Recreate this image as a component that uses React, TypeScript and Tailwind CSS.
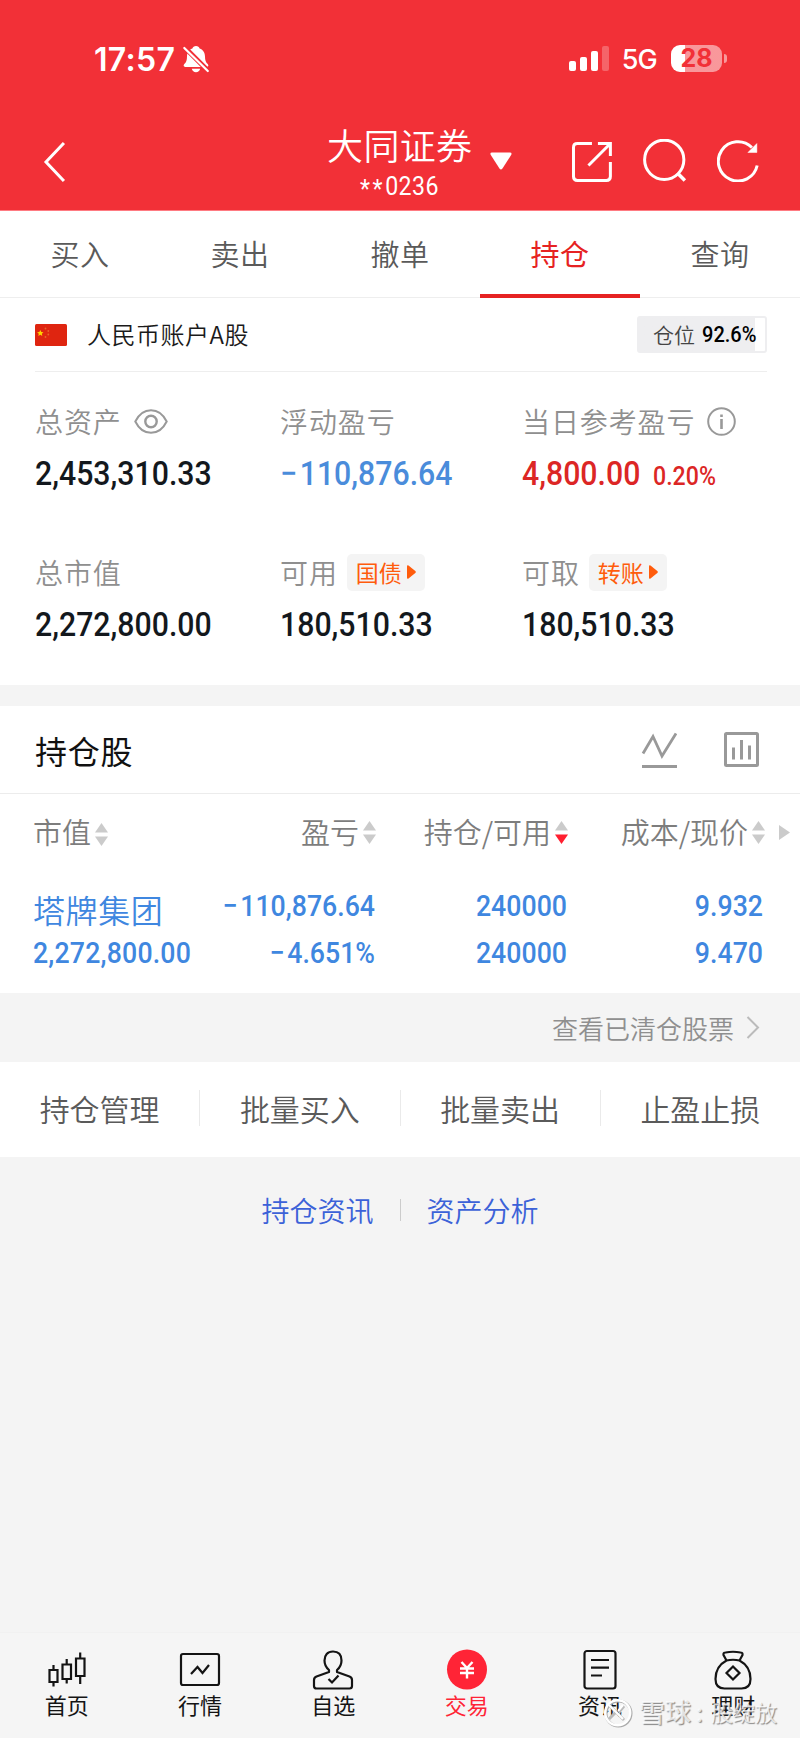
import clsx from 'clsx';
import type { ReactNode } from 'react';

const TABS = ['买入', '卖出', '撤单', '持仓', '查询'];
const ACTIONS = ['持仓管理', '批量买入', '批量卖出', '止盈止损'];

const Num = ({ children, className }: { children: ReactNode; className?: string }) => (
  <span
    className={clsx(
      "inline-block scale-x-[0.89] whitespace-nowrap font-['Roboto',sans-serif] font-medium",
      className,
    )}
  >
    {children}
  </span>
);

const Minus = () => <span className="mr-[3px]">−</span>;

const StatusBar = () => (
  <div className="flex h-[119px] items-start pt-[43px] pr-[73px] pl-[94px] font-['Inter',sans-serif]">
    <span className="text-[32px] leading-[33px] font-semibold tracking-[0.300px]">17:57</span>
    <svg className="mt-[2px] ml-[7px]" width="28" height="29" viewBox="0 0 28 29">
      <path
        d="M14 1c-1.9 0-3.200 1-3.600 2.400C6.600 4.700 5 7.800 5 11.500c0 4-.8 5.700-2.700 7.600C1.200 20.300 1.500 22 3.200 22h21.600c1.700 0 2-1.700.9-2.900-1.900-1.900-2.700-3.600-2.700-7.600 0-3.700-1.600-6.800-5.400-8.100C17.200 2 15.900 1 14 1zM9.800 23.800h8.400c-.5 2.100-2.200 3.400-4.200 3.400s-3.700-1.300-4.200-3.400z"
        fill="white"
      />
      <path d="M1.200 1 26 25.700" stroke="#f23037" strokeWidth="5" />
      <path d="M2.300 3 25.800 26" stroke="white" strokeWidth="2.200" strokeLinecap="round" />
    </svg>
    <div className="ml-auto flex items-start">
      <svg className="mt-[3px]" width="40" height="26" viewBox="0 0 40 26" fill="white">
        <rect x="0" y="15" width="7" height="10" rx="2" />
        <rect x="11" y="11" width="7" height="14" rx="2" />
        <rect x="22" y="5" width="7" height="20" rx="2" />
        <rect x="33" y="0" width="7" height="25" rx="2" opacity="0.25" />
      </svg>
      <span className="ml-[13px] text-[27px] leading-[34px] font-medium tracking-[-0.800px]">5G</span>
      <div className="mt-[2px] ml-[14px] flex items-center">
        <div className="flex h-[27px] w-[51px] items-center justify-center rounded-[9px] bg-linear-to-r from-white from-28% to-white/50 to-28% text-[25px] leading-none font-bold text-[#f23037]">
          28
        </div>
        <div className="ml-[2px] h-[9px] w-[3px] rounded-r-full bg-white/50" />
      </div>
    </div>
  </div>
);

const TitleBar = () => (
  <div className="flex h-[91px] items-start pr-[40px] pl-[43px]">
    <svg className="mt-[22px]" width="24" height="42" viewBox="0 0 24 42" fill="none">
      <path d="M21 2 3 21l18 19" stroke="white" strokeWidth="3" />
    </svg>
    <div className="ml-[258px] flex w-[150px] flex-col items-center pt-[7px]">
      <span className="text-[36px] leading-[36px] font-[350] tracking-[0.300px]">大同证券</span>
      <Num className="mt-[9px] text-[26px] leading-[30px] font-normal">
        <span className="relative top-[3px] tracking-[3px]">**</span>
        <span className="tracking-[0.500px]">0236</span>
      </Num>
    </div>
    <svg className="mt-[33px] ml-[16px]" width="22" height="18" viewBox="0 0 22 18">
      <path d="M2 .5h18q2.500.2 1.200 2.500L12.500 16.500q-1.500 1.800-3 0L.8 3Q-.5.700 2 .5z" fill="white" />
    </svg>
    <svg className="mt-[23px] ml-[60px]" width="40" height="40" viewBox="0 0 40 40" fill="none" stroke="white" strokeWidth="3">
      <path d="M20 1.500H5.500q-4 0-4 4v29q0 4 4 4h29q4 0 4-4V20" />
      <path d="M26 1.500h12.500V14M38 2 16.500 23.500" />
    </svg>
    <svg className="mt-[20px] ml-[31px]" width="44" height="43" viewBox="0 0 44 43" fill="none" stroke="white" strokeWidth="3">
      <circle cx="21.300" cy="20.800" r="19.700" />
      <path d="m34.500 34 7.500 7.500" strokeWidth="3.500" />
    </svg>
    <svg className="mt-[20px] ml-[30px]" width="43" height="43" viewBox="0 0 43 43" fill="none" stroke="white" strokeWidth="3">
      <path d="M40.300 26.500A19.700 19.700 0 1 1 35 8.500" />
      <path d="M40 4.500v9h-9z" fill="white" strokeWidth="0.500" />
    </svg>
  </div>
);

const Chip = ({ children }: { children: ReactNode }) => (
  <span className="ml-[9px] flex h-[37px] w-[78px] items-center justify-center gap-[5px] rounded-[5px] bg-[#f4f4f4] text-[23px] leading-none font-normal tracking-normal text-[#ff5c0c]">
    {children}
    <svg width="9" height="14" viewBox="0 0 9 14" fill="currentColor">
      <path d="M0 1.500Q0-.5 1.500.5l6.800 5.500q1 1 0 2L1.500 13.500Q0 14.500 0 12.500z" />
    </svg>
  </span>
);

type StatProps = {
  label: string;
  value: ReactNode;
  color?: string;
  extra?: ReactNode;
  suffix?: ReactNode;
};

const Stat = ({ label, value, color = 'text-[#13181d]', extra, suffix }: StatProps) => (
  <div>
    <div className="flex h-[38px] items-center text-[28px] leading-none font-[350] tracking-[0.900px] whitespace-nowrap text-[#8f8f8f]">
      {label}
      {extra}
    </div>
    <div className={clsx('mt-[13px] flex h-[39px] items-baseline text-[34px] leading-[40px]', color)}>
      <Num className="origin-left">{value}</Num>
      {suffix}
    </div>
  </div>
);

const Sort = ({ desc, low }: { desc?: boolean; low?: boolean }) => (
  <svg className={clsx('ml-[4px] shrink-0', low && 'mt-[4px]')} width="13" height="23" viewBox="0 0 13 23">
    <path d="M6.500 0 13 9.500H0z" fill="#cbcbcb" />
    <path d="M0 13.500h13L6.500 23z" fill={desc ? '#ff1f30' : '#cbcbcb'} />
  </svg>
);

const Holdings = () => (
  <div className="h-[199px] bg-white">
    <div className="grid h-[76px] grid-cols-[156px_186px_192px_197px_1fr] items-center pl-[34px] text-[29px] leading-none font-[350] whitespace-nowrap text-[#7d7d7d]">
      <div className="-ml-px flex items-center">
        <span className="mt-[-2px]">市值</span>
        <Sort low />
      </div>
      <div className="flex items-center justify-end">
        <span className="mt-[-2px]">盈亏</span>
        <Sort />
      </div>
      <div className="flex items-center justify-end">
        <span className="mt-[-2px]">持仓/可用</span>
        <Sort desc />
      </div>
      <div className="flex items-center justify-end">
        <span className="mt-[-2px]">成本/现价</span>
        <Sort />
      </div>
      <svg className="ml-[14px]" width="11" height="15" viewBox="0 0 11 15">
        <path d="M0 0 11 7.500 0 15z" fill="#cbcbcb" />
      </svg>
    </div>
    <div className="grid grid-cols-[156px_186px_192px_196px] pt-[12px] pl-[33px] text-[30px] leading-[47px] text-[#3f87e0]">
      <span className="pt-[7px] text-[32px] leading-[40px] font-[350] tracking-[0.600px] whitespace-nowrap">
        塔牌集团
      </span>
      <Num className="origin-right text-right">
        <Minus />
        110,876.64
      </Num>
      <Num className="origin-right text-right">240000</Num>
      <Num className="origin-right text-right">9.932</Num>
      <Num className="origin-left tracking-[0.200px]">2,272,800.00</Num>
      <Num className="origin-right text-right">
        <Minus />
        4.651%
      </Num>
      <Num className="origin-right text-right">240000</Num>
      <Num className="origin-right text-right">9.470</Num>
    </div>
  </div>
);

const NavItem = ({ label, active, children }: { label: string; active?: boolean; children: ReactNode }) => (
  <div
    className={clsx(
      'flex flex-1 flex-col items-center pt-[15px] text-[22px] leading-[25px]',
      active ? 'text-[#ff2436]' : 'text-[#141414]',
    )}
  >
    <svg width="44" height="44" viewBox="0 0 44 44" fill="none" stroke="currentColor" strokeWidth="2.200">
      {children}
    </svg>
    {label}
  </div>
);

const BottomNav = () => (
  <div className="flex h-[106px] border-t border-[#f1f1f1] bg-[#f5f5f5]">
    <NavItem label="首页">
      <path d="M4.500 22h8v12h-8zM8.500 17v5M8.500 34v4.500M17.500 16.500h8.500v14.500h-8.500zM21.700 11v5.500M21.700 31v4.500M31 10.500h8.500v17.500H31zM35.200 4.500v6M35.200 28v8" />
    </NavItem>
    <NavItem label="行情">
      <rect x="3" y="6" width="38" height="31" rx="2" />
      <path d="m13 26 6.500-7 5 6L31 17" />
    </NavItem>
    <NavItem label="自选">
      <path
        d="M18 24v-2c-3-2.500-4.500-6-4.500-9.500 0-5.500 3-9 8.500-9s8.500 3.500 8.500 9c0 3.500-1.500 7-4.500 9.500v2l12.500 4.500q2.500 1 2.500 3.500v6q0 2.500-2.500 2.500h-33Q3 40.500 3 38v-6q0-2.500 2.500-3.500z"
        strokeLinejoin="round"
      />
      <path d="m17.500 31 3.500 3.500 6.500-7" />
    </NavItem>
    <NavItem label="交易" active>
      <circle cx="22" cy="21.500" r="20" fill="currentColor" stroke="none" />
      <path d="m16.500 14 5.500 6 5.500-6M15 20.500h14M15 25h14M22 20v10.500" stroke="white" strokeWidth="2.400" />
    </NavItem>
    <NavItem label="资讯">
      <rect x="6.500" y="3" width="31" height="37.500" rx="2.500" />
      <path d="M13 12h18M13 19.700h18M13 27.500h11" />
    </NavItem>
    <NavItem label="理财">
      <path
        d="M15.500 12.500 12.500 7q-.5-2.500 2-2.500 7.500-1.500 15 0 2.500 0 2 2.500l-3 5.500M15.500 12.500C7 17 4.500 24 4.500 31q0 9.500 9 9.500h17q9 0 9-9.500c0-7-2.500-14-11-18.500q-6.500-1.500-13 0z"
        strokeLinejoin="round"
      />
      <path d="m22 18.500 6.500 6.500-6.500 6.500-6.500-6.500z" />
    </NavItem>
  </div>
);

const Watermark = () => (
  <div className="absolute right-[23px] bottom-[10px] flex items-center text-[25px] leading-none text-white/75 [text-shadow:1px_1px_1px_#888]">
    <svg className="mr-[6px]" width="30" height="30" viewBox="0 0 30 30" fill="none" stroke="white">
      <circle cx="15.500" cy="15.500" r="12.500" stroke="#aaa" strokeWidth="3" />
      <circle cx="14.700" cy="14.700" r="12.500" strokeWidth="2.500" />
      <path d="m7 8 14 14M21 8l-5 6M6 21l6-6" stroke="#bbb" strokeWidth="3" />
      <path d="m6 7 14 14M20 7l-5 6" strokeWidth="2" />
    </svg>
    <span className="mb-[4px] text-[26px] font-medium">雪球</span>
    <span className="mb-[4px] w-[20px] pl-[5px]">:</span>
    <span className="mb-[4px] text-[22px]">股绽放</span>
  </div>
);

const App = () => (
  <div className="relative flex h-[1738px] w-[800px] flex-col overflow-hidden bg-[#f4f4f4] font-['Noto_Sans_CJK_SC',sans-serif]">
    <header className="h-[211px] border-b border-[#ff7b82] bg-[#f23037] text-white">
      <StatusBar />
      <TitleBar />
    </header>

    <nav className="flex h-[87px] border-b border-[#eee] bg-white text-[29px] font-[350] tracking-[0.500px] text-[#5a5a5a]">
      {TABS.map((tab) => (
        <div
          key={tab}
          className={clsx(
            'flex flex-1 items-center justify-center',
            tab === '持仓' && '-mb-px border-b-4 border-[#e62222] pt-[3px] font-normal text-[#e62222]',
          )}
        >
          {tab}
        </div>
      ))}
    </nav>

    <section className="h-[387px] bg-white pr-[33px] pl-[35px]">
      <div className="flex h-[74px] items-center border-b border-[#eee]">
        <svg width="32" height="22" viewBox="0 0 32 22">
          <rect width="32" height="22" rx="1.500" fill="#df2510" />
          <path d="m5.300 6 1 1.900 2.200.3-1.700 1.500.5 2.200-2-1.100-2 1.100.5-2.200-1.700-1.500 2.200-.3z" fill="#ffd400" />
          <g fill="#e8642a">
            <circle cx="10.500" cy="4.500" r="0.900" />
            <circle cx="13.300" cy="7" r="0.900" />
            <circle cx="13.300" cy="10.500" r="0.900" />
            <circle cx="10.500" cy="13" r="0.900" />
          </g>
        </svg>
        <span className="mt-[-2px] ml-[20px] text-[24px] leading-none font-[350] tracking-[0.500px] text-[#1a1a1a]">
          人民币账户A股
        </span>
        <div className="ml-auto flex h-[37px] w-[130px] items-center rounded-[3px] border-2 border-[#eeeef0] bg-linear-to-r from-[#eeeef0] from-92% to-white to-92% pl-[14px] whitespace-nowrap">
          <span className="text-[21px] font-[350] text-[#444]">仓位</span>
          <Num className="ml-[7px] origin-left text-[22.500px] text-black">92.6%</Num>
        </div>
      </div>
      <div className="grid grid-cols-[245px_242px_1fr] gap-y-[61px] pt-[30px]">
        <Stat
          label="总资产"
          value="2,453,310.33"
          extra={
            <svg className="ml-[12px]" width="34" height="25" viewBox="0 0 34 25" fill="none" stroke="#999" strokeWidth="2">
              <path d="M1.300 12.500C5 5 10.500 1.200 17 1.200S29 5 32.700 12.500C29 20 23.500 23.800 17 23.800S5 20 1.300 12.500z" />
              <circle cx="17" cy="12.500" r="5.700" strokeWidth="2.400" />
            </svg>
          }
        />
        <Stat
          label="浮动盈亏"
          value={
            <>
              <Minus />
              110,876.64
            </>
          }
          color="text-[#4a8cdb]"
        />
        <Stat
          label="当日参考盈亏"
          value="4,800.00"
          color="text-[#dc2625]"
          extra={
            <svg className="ml-[12px]" width="29" height="29" viewBox="0 0 29 29" fill="none" stroke="#999" strokeWidth="2">
              <circle cx="14.500" cy="14.500" r="13.300" />
              <path d="M14.500 12v10M14.500 7.500v2.500" strokeWidth="2.600" />
            </svg>
          }
          suffix={<Num className="ml-[-2px] origin-left text-[26px]">0.20%</Num>}
        />
        <Stat label="总市值" value="2,272,800.00" />
        <Stat label="可用" value="180,510.33" extra={<Chip>国债</Chip>} />
        <Stat label="可取" value="180,510.33" extra={<Chip>转账</Chip>} />
      </div>
    </section>

    <section className="mt-[21px]">
      <div className="flex h-[88px] items-center border-b border-[#ececec] bg-white pr-[41px] pl-[35px]">
        <h2 className="text-[32px] leading-none tracking-[0.800px] text-[#111]">持仓股</h2>
        <svg className="ml-auto" width="36" height="36" viewBox="0 0 36 36" fill="none" stroke="#999" strokeWidth="2.800">
          <path d="M2 21.500 12 4.500 21 24 35 1.500M1 34.500h35" />
        </svg>
        <svg className="ml-[47px]" width="35" height="35" viewBox="0 0 35 35" fill="none" stroke="#999" strokeWidth="3">
          <rect x="1.500" y="1.500" width="32" height="32" rx="1" />
          <path d="M9.500 15.500v12M17.500 8v19.500M25.500 13.500v14" />
        </svg>
      </div>
      <Holdings />
      <div className="flex h-[69px] items-center justify-end pr-[40px] text-[26px] leading-none font-[350] text-[#8f8f8f]">
        查看已清仓股票
        <svg className="ml-[12px]" width="14" height="23" viewBox="0 0 14 23" fill="none">
          <path d="m1.500 1 10.500 10.500L1.500 22" stroke="#bbb" strokeWidth="2" />
        </svg>
      </div>
    </section>

    <div className="flex h-[95px] items-center divide-x divide-[#eaeaea] bg-white text-[30px] leading-[36px] font-[350] text-[#5a5a5a]">
      {ACTIONS.map((action) => (
        <span key={action} className="mb-[3px] flex-1 text-center">
          {action}
        </span>
      ))}
    </div>

    <div className="flex h-[106px] items-center justify-center text-[28px] leading-none font-[350] text-[#3c62d8]">
      <span>持仓资讯</span>
      <span className="mx-[26px] h-[22px] w-px bg-[#ccc]" />
      <span>资产分析</span>
    </div>

    <div className="mt-auto">
      <BottomNav />
    </div>
    <Watermark />
  </div>
);

export default App;
